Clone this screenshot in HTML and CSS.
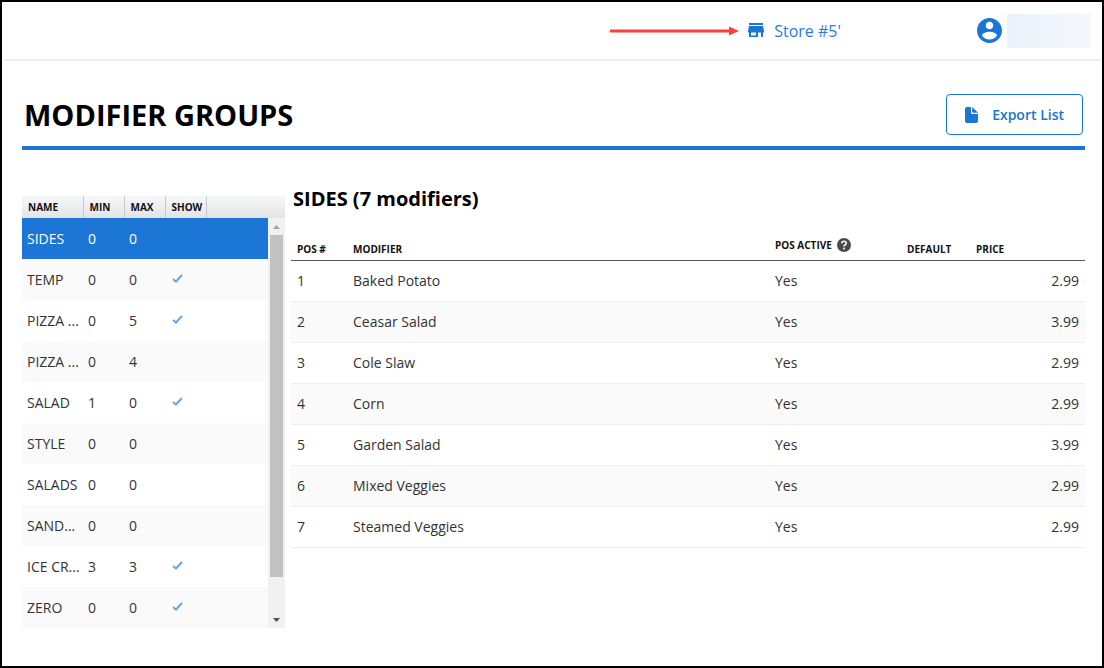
FILE: index.html
```html
<!DOCTYPE html>
<html lang="en">
<head>
<meta charset="utf-8">
<title>Modifier Groups</title>
<link rel="stylesheet" href="styles.css">
</head>
<body>
<header class="topbar">
  <svg class="arrow" viewBox="0 0 129 12" aria-hidden="true"><path d="M1 6H120" stroke="#fb3e3e" stroke-width="3" stroke-linecap="round"/><path d="M119 1.5L129 6L119 10.5Z" fill="#fb3e3e"/></svg>
  <a class="store" href="#">
    <svg class="store-icon" viewBox="0 0 16 15" aria-hidden="true"><path fill="#1c76d5" fill-rule="evenodd" d="M1 0H15V2H1ZM1 3H15L16 8V9.500H15V14H13V9.500H10V14H1V9.500H0V8ZM3 9.500V12.500H8V9.500Z"/></svg>
    <span>Store #5'</span>
  </a>
  <div class="account">
    <svg class="avatar" viewBox="2 2 20 20" aria-hidden="true"><path fill="#1c76d5" d="M12 2C6.480 2 2 6.480 2 12s4.480 10 10 10 10-4.480 10-10S17.520 2 12 2zm0 3c1.660 0 3 1.340 3 3s-1.340 3-3 3-3-1.340-3-3 1.340-3 3-3zm0 14.200c-2.500 0-4.710-1.280-6-3.220.03-1.990 4-3.080 6-3.080 1.990 0 5.970 1.090 6 3.080-1.290 1.940-3.500 3.220-6 3.220z"/></svg>
    <div class="account-name"></div>
  </div>
</header>
<main class="page">
  <div class="page-head">
    <h1>MODIFIER GROUPS</h1>
    <button class="export" type="button">
      <svg class="file-icon" viewBox="0 0 13 16" aria-hidden="true"><path fill="#1c76d5" d="M2 0H6V5.500Q6 7 7.500 7H13V14Q13 16 11 16H2Q0 16 0 14V2Q0 0 2 0ZM7.200 0L13 5.800H8.200Q7.200 5.800 7.200 4.800Z"/></svg>
      <span>Export List</span>
    </button>
  </div>
  <div class="content">
    <section class="groups">
      <table class="group-table">
        <colgroup><col class="c-name"><col class="c-num"><col class="c-num"><col class="c-num"><col></colgroup>
        <thead><tr><th>NAME</th><th>MIN</th><th>MAX</th><th>SHOW</th><th></th></tr></thead>
      </table>
      <div class="group-scroll">
        <table class="group-table">
          <colgroup><col class="c-name"><col class="c-num"><col class="c-num"><col class="c-num"><col></colgroup>
          <tbody>
            <tr class="selected"><td>SIDES</td><td>0</td><td>0</td><td></td><td></td></tr>
            <tr><td>TEMP</td><td>0</td><td>0</td><td><svg class="check" viewBox="0 0 11 9"><path d="M1 5L4 7.500L10 1"/></svg></td><td></td></tr>
            <tr><td>PIZZA ...</td><td>0</td><td>5</td><td><svg class="check" viewBox="0 0 11 9"><path d="M1 5L4 7.500L10 1"/></svg></td><td></td></tr>
            <tr><td>PIZZA ...</td><td>0</td><td>4</td><td></td><td></td></tr>
            <tr><td>SALAD</td><td>1</td><td>0</td><td><svg class="check" viewBox="0 0 11 9"><path d="M1 5L4 7.500L10 1"/></svg></td><td></td></tr>
            <tr><td>STYLE</td><td>0</td><td>0</td><td></td><td></td></tr>
            <tr><td>SALADS</td><td>0</td><td>0</td><td></td><td></td></tr>
            <tr><td>SAND...</td><td>0</td><td>0</td><td></td><td></td></tr>
            <tr><td>ICE CR...</td><td>3</td><td>3</td><td><svg class="check" viewBox="0 0 11 9"><path d="M1 5L4 7.500L10 1"/></svg></td><td></td></tr>
            <tr><td>ZERO</td><td>0</td><td>0</td><td><svg class="check" viewBox="0 0 11 9"><path d="M1 5L4 7.500L10 1"/></svg></td><td></td></tr>
          </tbody>
        </table>
        <div class="scrollbar">
          <svg class="scroll-arrow" viewBox="0 0 17 17"><path d="M5 11L8.500 7L12 11Z" fill="#a3a3a3"/></svg>
          <div class="track"><div class="thumb"></div></div>
          <svg class="scroll-arrow" viewBox="0 0 17 17"><path d="M5 7L12 7L8.500 11Z" fill="#505050"/></svg>
        </div>
      </div>
    </section>
    <section class="modifiers">
      <h2>SIDES (7 modifiers)</h2>
      <table class="mod-table">
        <colgroup><col class="m-pos"><col><col class="m-active"><col class="m-default"><col class="m-price"></colgroup>
        <thead><tr><th>POS #</th><th>MODIFIER</th><th><span class="with-help">POS ACTIVE <svg class="help" viewBox="0 0 14 14" aria-hidden="true"><circle cx="7" cy="7" r="7" fill="#4a4a4d"/><path d="M4.800 5.400Q4.900 3.300 7 3.300T9.200 5.200Q9.200 6.300 7.900 7Q7 7.500 7 8.500" fill="none" stroke="#fff" stroke-width="1.600"/><circle cx="7" cy="10.600" r="1" fill="#fff"/></svg></span></th><th>DEFAULT</th><th>PRICE</th></tr></thead>
        <tbody>
          <tr><td>1</td><td>Baked Potato</td><td>Yes</td><td></td><td>2.99</td></tr>
          <tr><td>2</td><td>Ceasar Salad</td><td>Yes</td><td></td><td>3.99</td></tr>
          <tr><td>3</td><td>Cole Slaw</td><td>Yes</td><td></td><td>2.99</td></tr>
          <tr><td>4</td><td>Corn</td><td>Yes</td><td></td><td>2.99</td></tr>
          <tr><td>5</td><td>Garden Salad</td><td>Yes</td><td></td><td>3.99</td></tr>
          <tr><td>6</td><td>Mixed Veggies</td><td>Yes</td><td></td><td>2.99</td></tr>
          <tr><td>7</td><td>Steamed Veggies</td><td>Yes</td><td></td><td>2.99</td></tr>
        </tbody>
      </table>
    </section>
  </div>
</main>
</body>
</html>
```
FILE: styles.css
```css
* { box-sizing: border-box; }
body {
  margin: 0;
  min-height: 100vh;
  border: 2px solid #000;
  background: #fff;
  color: #333;
  font: 14px/20px "Open Sans", "Noto Sans", sans-serif;
}
svg { display: block; flex: none; }

.topbar {
  display: flex;
  align-items: center;
  justify-content: flex-end;
  height: 59px;
  margin: 0 1px 0 3px;
  padding-right: 10px;
  border-bottom: 2px solid #eee;
}
.arrow { width: 129px; height: 12px; margin-right: 9px; }
.store {
  display: flex;
  align-items: center;
  gap: 10px;
  margin-right: 136px;
  color: #2b7cd3;
  font-size: 16px;
  text-decoration: none;
}
.store-icon { width: 16px; height: 15px; }
.account { display: flex; align-items: center; gap: 5px; }
.avatar { width: 25px; height: 25px; }
.account-name {
  width: 84px;
  height: 34px;
  background: linear-gradient(90deg, #eaf2fb, #f4f8fd);
}

.page { padding: 33px 17px 36px 20px; }
.page-head {
  display: flex;
  align-items: center;
  justify-content: space-between;
  padding: 0 2px 11px 2px;
  border-bottom: 4px solid #1976d2;
}
h1 { margin: 0; color: #000; font-size: 29px; line-height: 40px; font-weight: 700; }
.export {
  display: flex;
  align-items: center;
  gap: 14px;
  height: 41px;
  padding: 0 18px;
  border: 1px solid #1976d2;
  border-radius: 4px;
  background: #fff;
  color: #1976d2;
  font: 600 14px/20px "Open Sans", "Noto Sans", sans-serif;
}
.file-icon { width: 13px; height: 16px; }

.content { display: flex; align-items: flex-start; gap: 6px; padding-top: 36px; }
.groups { flex: none; width: 263px; padding-top: 10px; }
table { width: 100%; border-collapse: collapse; table-layout: fixed; }
th { color: #111; font-size: 10px; line-height: 16px; font-weight: 700; text-align: left; }
.c-name { width: 61px; }
.c-num { width: 41px; }
.group-table thead tr { background: linear-gradient(#f6f7f8, #e2e4e5); }
.group-table th { height: 22px; padding: 0 0 0 6px; border-right: 1px solid #c8c8c8; }
.group-table th:last-child { border-right: 0; }
.group-table td { height: 41px; padding: 0 0 0 5px; white-space: nowrap; }
.group-table tr:nth-child(even) { background: #fafafa; }
.group-table .selected { background: #1c76d5; color: #fff; }
.group-scroll { display: flex; }
.scrollbar {
  display: flex;
  flex: none;
  flex-direction: column;
  width: 17px;
  background: #f1f1f1;
}
.scroll-arrow { width: 17px; height: 17px; }
.track { flex: 1; padding: 0 2px; }
.thumb { height: 91%; background: #c1c1c1; }
.check { width: 11px; height: 9px; margin: 0 0 2px 2px; fill: none; stroke: #6ba6e5; stroke-width: 2; }

.modifiers { flex: 1; min-width: 0; }
h2 { margin: 0 0 22px 2px; color: #000; font-size: 20px; line-height: 26px; font-weight: 700; }
.m-pos { width: 56px; }
.m-active { width: 132px; }
.m-default { width: 69px; }
.m-price { width: 115px; }
.mod-table th { height: 26px; padding: 0 6px 3px; border-bottom: 1px solid #55555a; vertical-align: bottom; }
.with-help { display: flex; align-items: center; gap: 5px; padding-bottom: 4px; }
.help { width: 14px; height: 14px; }
.mod-table td { height: 41px; padding: 0 6px; border-bottom: 1px solid #eee; }
.mod-table tbody tr:nth-child(even) { background: #fafafa; }
.mod-table td:last-child { text-align: right; }
```
